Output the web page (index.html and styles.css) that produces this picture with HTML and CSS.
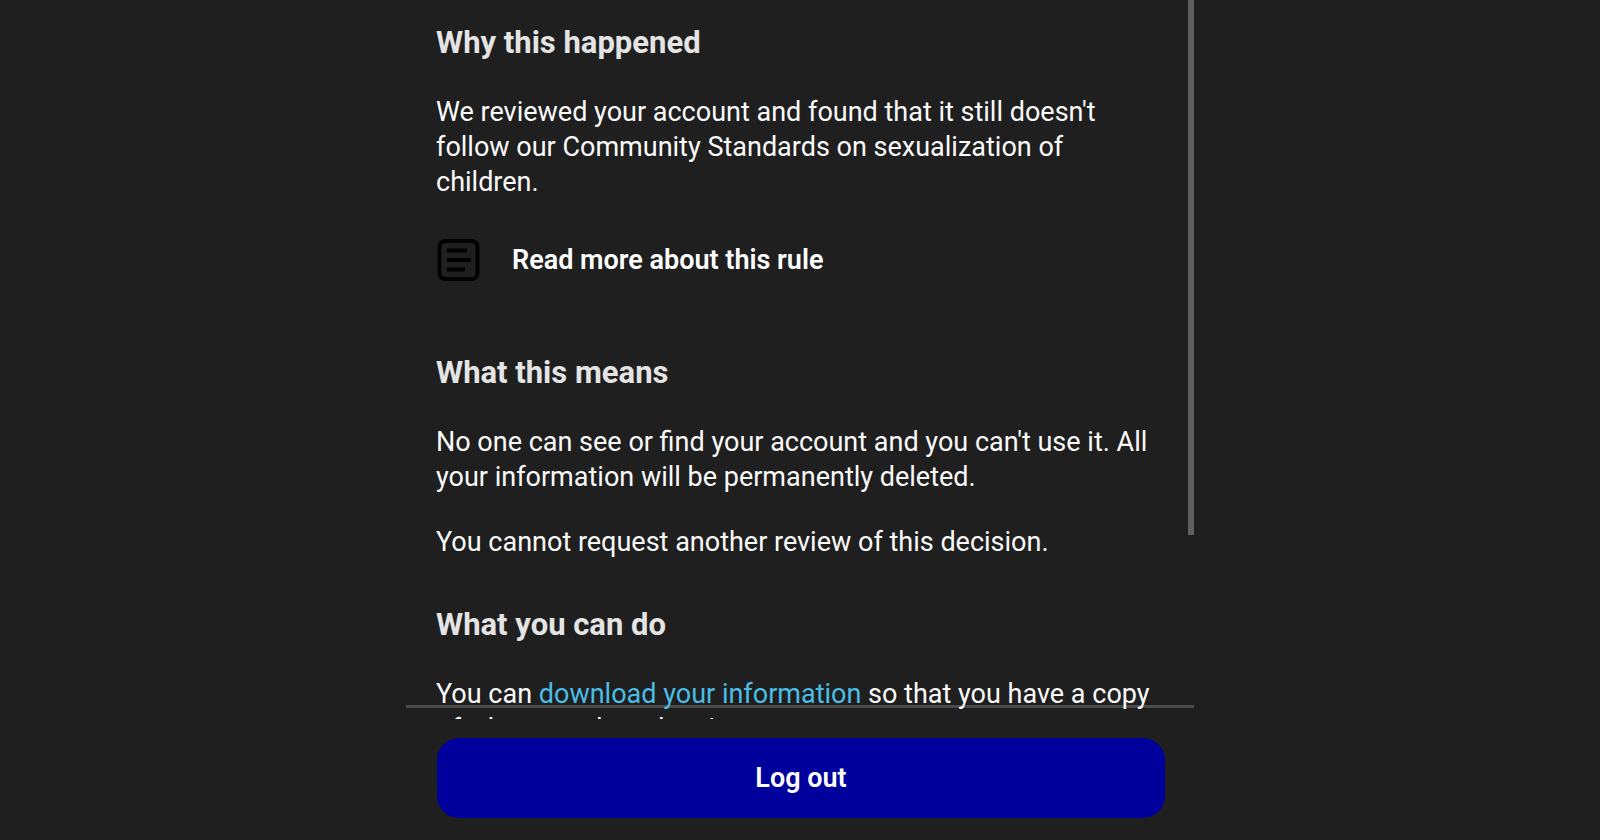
FILE: index.html
```
<!DOCTYPE html>
<html lang="en">
<head>
<meta charset="UTF-8">
<meta name="viewport" content="width=device-width, initial-scale=1.0">
<title>Account review</title>
<link rel="stylesheet" href="styles.css">
</head>
<body>

<div class="panel">
  <main class="content">
    <section>
      <h2>Why this happened</h2>
      <p>We reviewed your account and found that it still doesn't follow our Community Standards on sexualization of children.</p>
      <a class="rule-link" href="#rule">
        <svg class="rule-icon" viewBox="0 0 44 44" aria-hidden="true">
          <rect x="3.5" y="3" width="38" height="38" rx="5.5" fill="none" stroke="#000" stroke-width="3.8"/>
          <path d="M11 12.5H31M11 22H35M11 31.5H29" fill="none" stroke="#000" stroke-width="3.8"/>
        </svg>
        <span>Read more about this rule</span>
      </a>
    </section>

    <section>
      <h2>What this means</h2>
      <p>No one can see or find your account and you can't use it. All your information will be permanently deleted.</p>
      <p>You cannot request another review of this decision.</p>
    </section>

    <section>
      <h2>What you can do</h2>
      <p>You can <a class="text-link" href="#download">download your information</a> so that you have a copy of what you shared on Instagram.</p>
    </section>
  </main>
  <div class="scroll-thumb"></div>

  <footer>
    <button type="button">Log out</button>
  </footer>
</div>

</body>
</html>
```
FILE: styles.css
```
:root {
  --bg: #1f1f1f;
  --text: #fafafa;
  --heading: #e4e4e4;
  --line: #4a4a4a;
  --thumb: #606060;
  --link: #4bbde6;
  --primary: #00009c;
}

* {
  box-sizing: border-box;
}

body {
  margin: 0;
  background: var(--bg);
  color: var(--text);
  font-family: Roboto, sans-serif;
  font-size: 27px;
  line-height: 35px;
}

.panel {
  position: relative;
  display: flex;
  flex-direction: column;
  max-width: 788px;
  height: 100vh;
  margin: 0 auto;
}

/* the text runs slightly past the footer line */
.content {
  position: relative;
  z-index: 1;
  flex: 1;
  min-height: 0;
  padding: 24px 30px 0;
  overflow-y: auto;
  scrollbar-width: none;
}

h2 {
  margin: 0 0 34px;
  color: var(--heading);
  font-size: 31px;
  font-weight: 700;
  line-height: 37px;
}

p {
  margin: 0 0 30px;
}

section {
  margin-bottom: 46px;
}

.rule-link {
  display: flex;
  align-items: center;
  gap: 32px;
  margin-bottom: 72px;
  padding-top: 8px;
  color: #fff;
  font-weight: 600;
  text-decoration: none;
}

.rule-icon {
  width: 44px;
  height: 44px;
}

.text-link {
  color: var(--link);
  text-decoration: none;
}

.scroll-thumb {
  position: absolute;
  top: 0;
  right: 0;
  width: 6px;
  height: 63.7%;
  background: var(--thumb);
}

footer {
  margin-top: -14px;
  padding: 30px 29px 22px 31px;
  border-top: 3px solid var(--line);
}

footer button {
  width: 100%;
  height: 80px;
  border: none;
  border-radius: 22px;
  background: var(--primary);
  color: #fff;
  font-family: inherit;
  font-size: 27px;
  font-weight: 600;
  cursor: pointer;
}
```
